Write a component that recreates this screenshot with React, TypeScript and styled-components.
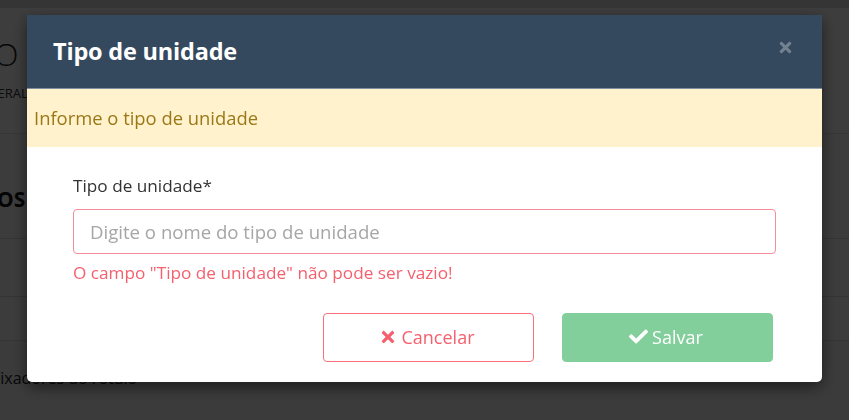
import React from "react";
import styled, { createGlobalStyle } from "styled-components";
import { FaCheck, FaTimes } from "react-icons/fa";

const GlobalStyle = createGlobalStyle`
	html, body {
		margin: 0;
		padding: 0;
		width: 849px;
		height: 420px;
		overflow: hidden;
		font-family: "Open Sans", "Noto Sans", sans-serif;
		background: #f7f7f7;
	}
	* {
		box-sizing: border-box;
	}
`;

const Page = styled.div`
	width: 849px;
	height: 420px;
	display: flex;
	flex-direction: column;
	background: #f7f7f7;
	color: #111;
`;

const TopStrip = styled.div`
	height: 8px;
	background: #dcdcdc;
	flex: none;
`;

const PageHeader = styled.div`
	height: 125px;
	padding: 26px 0 0 0;
	display: flex;
	flex-direction: column;
	gap: 10px;
	background: #fdfdfd;
`;

const PageTitle = styled.div`
	font-size: 32px;
	font-weight: 300;
	color: #222;
	margin-left: -6px;
	line-height: 40px;
	white-space: nowrap;
`;

const Breadcrumb = styled.div`
	font-size: 13px;
	color: #333;
	margin-left: -12px;
	text-transform: uppercase;
	white-space: nowrap;
`;

const Section = styled.div`
	flex: 1;
	display: flex;
	flex-direction: column;
	background: #f4f4f4;
	border-top: 1px solid #e2e2e2;
`;

const SectionTitle = styled.div`
	height: 105px;
	padding-top: 51px;
	font-size: 21px;
	font-weight: 700;
	margin-left: -3px;
	border-bottom: 1px solid #d8d8d8;
	background: #fbfbfb;
	white-space: nowrap;
`;

const TableRow = styled.div<{ $h: number }>`
	height: ${(p) => p.$h}px;
	border-bottom: 1px solid #d8d8d8;
	background: #fbfbfb;
`;

const FootText = styled.div`
	padding-top: 26px;
	font-size: 16px;
	color: #222;
	margin-left: -8px;
	white-space: nowrap;
`;

const Overlay = styled.div`
	position: fixed;
	inset: 0;
	background: rgba(0, 0, 0, 0.76);
`;

const Modal = styled.div`
	position: absolute;
	left: 27px;
	top: 15px;
	width: 795px;
	background: #fff;
	border-radius: 0 0 5px 5px;
	box-shadow: 0 5px 15px rgba(0, 0, 0, 0.5);
	display: flex;
	flex-direction: column;
	overflow: hidden;
`;

const ModalHeader = styled.div`
	height: 74px;
	background: #34495e;
	border-bottom: 1px solid #7f8fa0;
	display: flex;
	align-items: center;
	justify-content: space-between;
	padding: 0 28px 2px 26px;
`;

const ModalTitle = styled.h4`
	margin: 0;
	color: #fff;
	font-size: 23.5px;
	font-weight: 700;
	letter-spacing: -0.2px;
`;

const CloseButton = styled.button`
	border: none;
	background: none;
	padding: 0;
	margin-bottom: 6px;
	color: #72818f;
	display: flex;
	align-items: center;
	cursor: pointer;
`;

const Alert = styled.div`
	height: 58px;
	background: #fff2cc;
	color: #9b7817;
	font-size: 18.4px;
	display: flex;
	align-items: center;
	padding: 0 7px 2px;
`;

const Body = styled.div`
	padding: 28px 46px 20px 46px;
	display: flex;
	flex-direction: column;
`;

const Label = styled.label`
	font-size: 17.2px;
	color: #333;
	line-height: 22px;
	margin-bottom: 12px;
`;

const Input = styled.input<{ $invalid?: boolean }>`
	height: 45px;
	width: 100%;
	border: 1px solid ${(p) => (p.$invalid ? "#f58c97" : "#ccc")};
	border-radius: 4px;
	padding: 0 16px;
	font-family: "Open Sans", "Noto Sans", sans-serif;
	font-size: 18.6px;
	color: #333;
	outline: none;
	&::placeholder {
		color: #a6a6a6;
	}
`;

const ErrorText = styled.div`
	margin-top: 8px;
	font-size: 17.2px;
	color: #f5606e;
	line-height: 22px;
`;

const Actions = styled.div`
	display: flex;
	justify-content: flex-end;
	gap: 28px;
	margin-top: 29px;
	padding-right: 3px;
`;

const Button = styled.button<{ $variant: "outline" | "success" }>`
	width: 211px;
	height: 49px;
	border-radius: 4px;
	font-family: "Open Sans", "Noto Sans", sans-serif;
	font-size: 18px;
	display: flex;
	align-items: center;
	justify-content: center;
	gap: 4px;
	cursor: pointer;
	border: 1px solid
		${(p) => (p.$variant === "outline" ? "#fb6e7c" : "#82cf9b")};
	background: ${(p) => (p.$variant === "outline" ? "#fff" : "#82cf9b")};
	color: ${(p) => (p.$variant === "outline" ? "#f5606e" : "#fff")};
	padding: 0 3px 2px 0;
`;

export default function App() {
	return (
		<>
			<GlobalStyle />
			<Page>
				<TopStrip />
				<PageHeader>
					<PageTitle>O Cadastro</PageTitle>
					<Breadcrumb>Geral</Breadcrumb>
				</PageHeader>
				<Section>
					<SectionTitle>OS Tipos</SectionTitle>
					<TableRow $h={58} />
					<TableRow $h={44} />
					<FootText>Fixadores do rotulo</FootText>
				</Section>
			</Page>
			<Overlay>
				<Modal>
					<ModalHeader>
						<ModalTitle>Tipo de unidade</ModalTitle>
						<CloseButton aria-label="Fechar">
							<FaTimes size={17} />
						</CloseButton>
					</ModalHeader>
					<Alert>Informe o tipo de unidade</Alert>
					<Body>
						<Label htmlFor="tipo">Tipo de unidade*</Label>
						<Input
							id="tipo"
							$invalid
							placeholder="Digite o nome do tipo de unidade"
						/>
						<ErrorText>
							O campo "Tipo de unidade" não pode ser vazio!
						</ErrorText>
						<Actions>
							<Button $variant="outline">
								<FaTimes size={18} />
								Cancelar
							</Button>
							<Button $variant="success">
								<FaCheck size={19} />
								Salvar
							</Button>
						</Actions>
					</Body>
				</Modal>
			</Overlay>
		</>
	);
}
